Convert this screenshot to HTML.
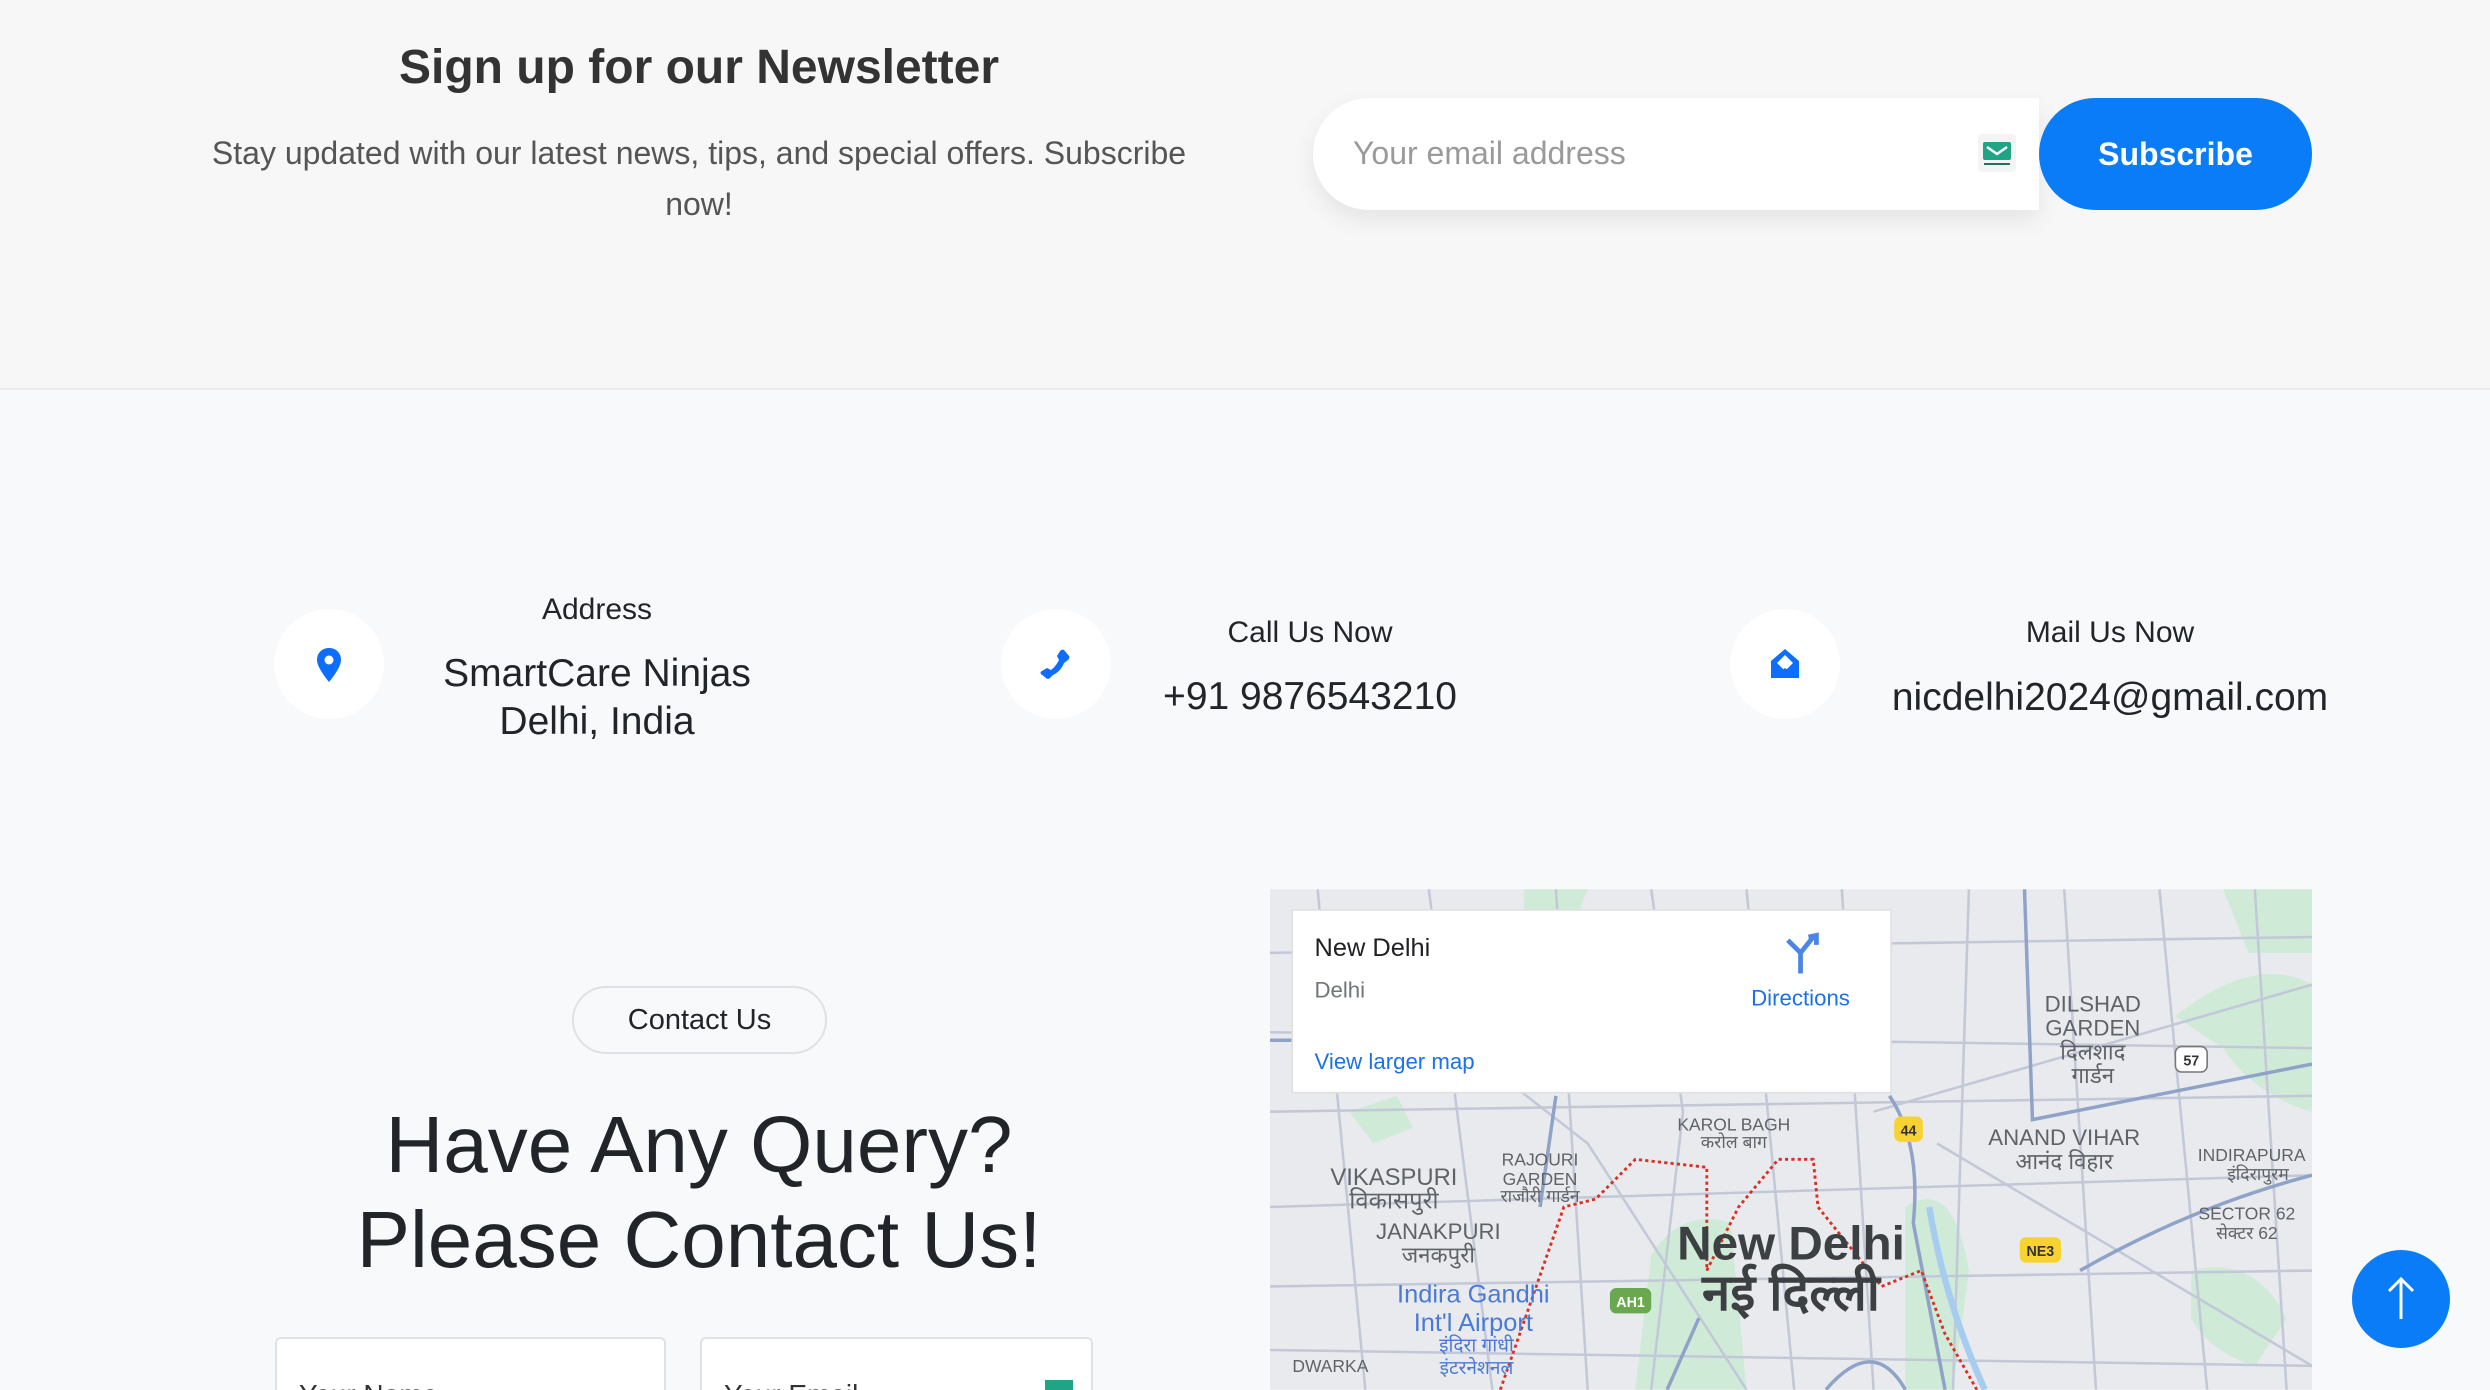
<!DOCTYPE html>
<html style="width:2490px;height:1390px;overflow:hidden"><head><meta charset="utf-8"><style>
*{margin:0;padding:0;box-sizing:border-box}
body{width:2490px;height:1390px;overflow:hidden;background:#f8f9fa;font-family:"Liberation Sans",Arial,sans-serif;position:relative;color:#212529}
.a{position:absolute}
.c{text-align:center;transform:translateX(-50%);white-space:nowrap}
</style></head><body>
<div class="a" style="left:0;top:0;width:2490px;height:389px;background:#f7f7f7"></div>
<div class="a" style="left:0;top:388px;width:2490px;height:2px;background:#ececec"></div>

<div class="a c" style="left:699px;top:40px;font-size:48px;font-weight:bold;color:#333">Sign up for our Newsletter</div>
<div class="a" style="left:199px;top:128px;width:1000px;text-align:center;font-size:32px;line-height:51px;color:#555">Stay updated with our latest news, tips, and special offers. Subscribe now!</div>

<div class="a" style="left:1313px;top:98px;width:726px;height:112px;background:#fff;border-radius:56px 0 0 56px;box-shadow:0 10px 24px rgba(0,0,0,.08)"></div>
<div class="a" style="left:1353px;top:135px;font-size:32px;color:#9a9a9a">Your email address</div>
<div class="a" style="left:1978px;top:134px;width:38px;height:38px;background:#f4f4f4;border-radius:4px"></div>
<svg class="a" style="left:1981px;top:140px" width="32" height="28" viewBox="0 0 32 28"><rect x="2" y="2" width="28" height="18" rx="2" fill="#1fa585"/><path d="M6 7 L16 14 L26 7" stroke="#fff" stroke-width="2.5" fill="none"/><rect x="3" y="23" width="26" height="2" fill="#2a6f63"/></svg>
<div class="a" style="left:2039px;top:98px;width:273px;height:112px;background:#0a7cf8;border-radius:56px;color:#fff;font-size:32px;font-weight:bold;line-height:112px;text-align:center">Subscribe</div>

<!-- contact info -->
<div class="a" style="left:274px;top:609px;width:110px;height:110px;border-radius:50%;background:#fff"></div>
<svg class="a" style="left:315px;top:647px" width="28" height="36" viewBox="0 0 28 36"><path d="M14 1C7 1 2 6 2 13c0 8 12 22 12 22s12-14 12-22C26 6 21 1 14 1z" fill="#0d6efd"/><circle cx="14" cy="13" r="4.5" fill="#fff"/></svg>
<div class="a c" style="left:597px;top:593px;font-size:30px">Address</div>
<div class="a c" style="left:597px;top:650px;font-size:39px;line-height:48px">SmartCare Ninjas<br>Delhi, India</div>

<div class="a" style="left:1001px;top:609px;width:110px;height:110px;border-radius:50%;background:#fff"></div>
<svg class="a" style="left:1040px;top:648px" width="32" height="32" viewBox="0 0 32 32"><path d="M24 2l5 6c1 1 0 3-1 4l-4 3c-2 5-6 10-11 12l-3 3c-1 1-3 1-4 0l-5-4c-1-1 0-3 1-3l5-3 4 2c3-2 6-6 8-10l-2-4 3-5c1-1 3-2 4-1z" fill="#0d6efd"/></svg>
<div class="a c" style="left:1310px;top:616px;font-size:30px">Call Us Now</div>
<div class="a c" style="left:1310px;top:675px;font-size:39px">+91 9876543210</div>

<div class="a" style="left:1730px;top:609px;width:110px;height:110px;border-radius:50%;background:#fff"></div>
<svg class="a" style="left:1768px;top:647px" width="34" height="34" viewBox="0 0 34 34"><path d="M17 2L3 14v17h28V14z" fill="#0d6efd"/><path d="M17 8l8 8-8 8-8-8z" fill="#fff"/><path d="M3 31l14-10 14 10z" fill="#0d6efd"/></svg>
<div class="a c" style="left:2110px;top:616px;font-size:30px">Mail Us Now</div>
<div class="a c" style="left:2110px;top:676px;font-size:39px">nicdelhi2024@gmail.com</div>

<!-- contact form -->
<div class="a" style="left:572px;top:986px;width:255px;height:68px;border:2px solid #dee2e6;border-radius:34px;font-size:29px;line-height:64px;text-align:center">Contact Us</div>
<div class="a c" style="left:699px;top:1097px;font-size:80px;line-height:95px">Have Any Query?<br>Please Contact Us!</div>
<div class="a" style="left:275px;top:1337px;width:391px;height:53px;overflow:hidden;background:#fff;border:2px solid #dee2e6;border-bottom:none;border-radius:6px 6px 0 0;padding:40px 0 0 22px;font-size:28px;color:#333;white-space:nowrap">Your Name</div>
<div class="a" style="left:700px;top:1337px;width:393px;height:53px;overflow:hidden;background:#fff;border:2px solid #dee2e6;border-bottom:none;border-radius:6px 6px 0 0;padding:40px 0 0 22px;font-size:28px;color:#333;white-space:nowrap">Your Email</div>
<div class="a" style="left:1045px;top:1380px;width:28px;height:10px;background:#1fa585"></div>

<!-- map -->
<svg class="a" style="left:1270px;top:889px" width="1042" height="501" viewBox="800 560 656 315" font-family="Liberation Sans,Noto Sans CJK SC,sans-serif">
<rect x="800" y="560" width="656" height="315" fill="#e8eaed"/>
<g fill="#cfead7">
<path d="M1370 640 Q1420 600 1456 620 L1456 700 Q1420 690 1400 660z"/>
<path d="M1040 790 Q1060 760 1090 770 L1100 875 L1030 875z"/>
<path d="M1380 800 Q1420 790 1440 830 L1420 860 Q1390 850 1380 830z"/>
<path d="M850 700 l30 -10 l10 20 l-25 10z"/>
<path d="M1200 760 Q1230 740 1240 800 L1230 875 L1200 875z"/>
<path d="M960 560 l40 0 l-10 25 l-30 0z"/>
<path d="M1400 560 l56 0 l0 40 l-40 0z"/>
</g>
<g stroke="#c3c8d8" stroke-width="1.6" fill="none">
<path d="M800 650 L1456 660"/><path d="M800 700 L1456 690"/><path d="M830 560 L860 875"/><path d="M900 560 L940 875"/>
<path d="M980 560 L1000 875"/><path d="M1040 560 L1060 700 L1040 875"/><path d="M1100 560 L1130 875"/><path d="M1160 560 L1180 875"/>
<path d="M1240 560 L1230 875"/><path d="M1300 560 L1320 875"/><path d="M1360 560 L1390 875"/><path d="M1420 560 L1440 875"/>
<path d="M800 760 L1456 740"/><path d="M800 810 L1456 800"/><path d="M800 850 L1456 860"/><path d="M800 600 L1456 590"/>
<path d="M820 580 L1000 720 L1100 875"/><path d="M1180 700 L1456 620"/><path d="M1220 720 L1456 860"/>
</g>
<g stroke="#8fa3c8" stroke-width="2.2" fill="none">
<path d="M1275 560 L1280 705 L1456 670"/><path d="M1190 690 Q1210 720 1205 770 L1225 875"/><path d="M1310 800 Q1380 760 1456 740"/>
<path d="M980 690 L970 760"/><path d="M800 655 L830 655"/><path d="M1050 875 L1070 830"/><path d="M1150 875 Q1180 840 1200 875"/>
</g>
<path d="M1215 760 Q1225 820 1250 875" stroke="#a6cdf0" stroke-width="4" fill="none"/>
<g stroke="#d93025" stroke-width="1.8" stroke-dasharray="2 2" fill="none">
<path d="M945 875 L985 760 L1005 755 L1030 730 L1075 735 L1075 800 L1095 760 L1120 730 L1142 730 L1145 760 L1185 810 L1210 800 L1225 840 L1245 875"/>
</g>
<g font-size="11" fill="#5f6368" text-anchor="middle">
<text x="1092" y="712">KAROL BAGH</text><text x="1092" y="723">करोल बाग</text>
<text x="1300" y="721" font-size="14">ANAND VIHAR</text><text x="1300" y="736" font-size="14">आनंद विहार</text>
<text x="1418" y="731">INDIRAPURA</text><text x="1422" y="743">इंदिरापुरम</text>
<text x="878" y="746" font-size="15">VIKASPURI</text><text x="878" y="761" font-size="15">विकासपुरी</text>
<text x="970" y="734">RAJOURI</text><text x="970" y="746">GARDEN</text><text x="970" y="757">राजौरी गार्डन</text>
<text x="906" y="780" font-size="14">JANAKPURI</text><text x="906" y="795" font-size="14">जनकपुरी</text>
<text x="1415" y="768">SECTOR 62</text><text x="1415" y="780">सेक्टर 62</text>
<text x="838" y="864">DWARKA</text>
<text x="1318" y="637" font-size="14">DILSHAD</text><text x="1318" y="652" font-size="14">GARDEN</text>
<text x="1318" y="667" font-size="14">दिलशाद</text><text x="1318" y="682" font-size="14">गार्डन</text>
<text x="1128" y="793" font-size="30" font-weight="bold" fill="#3c4043">New Delhi</text>
<text x="1128" y="825" font-size="32" font-weight="bold" fill="#3c4043">नई दिल्ली</text>
<text x="928" y="820" font-size="16" fill="#4a7ad8">Indira Gandhi</text><text x="928" y="838" font-size="16" fill="#4a7ad8">Int'l Airport</text>
<text x="930" y="851" font-size="12" fill="#4a7ad8">इंदिरा गांधी</text><text x="930" y="865" font-size="12" fill="#4a7ad8">इंटरनेशनल</text>
</g>
<g font-size="9" text-anchor="middle" font-weight="bold">
<rect x="1193" y="703" width="18" height="16" rx="4" fill="#f8d230"/><text x="1202" y="715" fill="#333">44</text>
<rect x="1272" y="779" width="26" height="16" rx="4" fill="#f8d230"/><text x="1285" y="791" fill="#333">NE3</text>
<rect x="1014" y="811" width="26" height="16" rx="4" fill="#6aa84f"/><text x="1027" y="823" fill="#fff">AH1</text>
<rect x="1370" y="659" width="20" height="16" rx="4" fill="#fff" stroke="#777"/><text x="1380" y="671" fill="#333">57</text>
</g>
<rect x="814" y="573" width="377" height="115" fill="#fff" stroke="#e0e0e0"/>
<text x="828" y="602" font-size="16" fill="#202124">New Delhi</text>
<text x="828" y="628" font-size="14" fill="#70757a">Delhi</text>
<path d="M1134 613 L1134 600 L1142 590 M1139 590 L1144 589 L1144 595 M1134 600 L1126 592" stroke="#4a86e8" stroke-width="3" fill="none"/>
<text x="1134" y="633" font-size="14" fill="#1a73e8" text-anchor="middle">Directions</text>
<text x="828" y="673" font-size="14" fill="#1a73e8">View larger map</text>
</svg>

<div class="a" style="left:2352px;top:1250px;width:98px;height:98px;border-radius:50%;background:#0a7cf8"></div>
<svg class="a" style="left:2385px;top:1275px" width="32" height="48" viewBox="0 0 32 48"><path d="M16 44V4M4 16L16 4 28 16" stroke="#fff" stroke-width="3" fill="none"/></svg>
</body></html>
